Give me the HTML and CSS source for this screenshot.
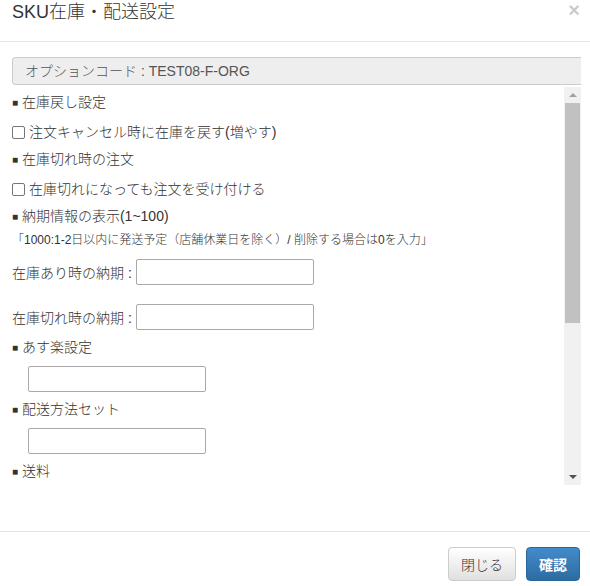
FILE: index.html
```
<!DOCTYPE html>
<html lang="ja">
<head>
    <meta charset="UTF-8">
    <title>SKU在庫・配送設定</title>
    <link rel="stylesheet" href="styles.css">
</head>
<body>

<div class="modal">
    <div class="modal-header">
        <h4 class="modal-title">SKU在庫・配送設定</h4>
        <span class="close">&times;</span>
    </div>

    <div class="modal-body">
        <div class="option-code">オプションコード : TEST08-F-ORG</div>

        <div class="scroll-box">
            <div class="scroll-content">
                <div class="section-title first"><span class="mark">■</span> 在庫戻し設定</div>
                <label class="check-row"><span class="checkbox"></span>注文キャンセル時に在庫を戻す(増やす)</label>

                <div class="section-title"><span class="mark">■</span> 在庫切れ時の注文</div>
                <label class="check-row"><span class="checkbox"></span>在庫切れになっても注文を受け付ける</label>

                <div class="section-title"><span class="mark">■</span> 納期情報の表示(1~100)</div>
                <div class="note">「1000:1-2日以内に発送予定（店舗休業日を除く）/ 削除する場合は0を入力」</div>

                <div class="field-row">
                    <span class="field-label">在庫あり時の納期 :</span>
                    <span class="text-input"></span>
                </div>
                <div class="field-row second">
                    <span class="field-label">在庫切れ時の納期 :</span>
                    <span class="text-input"></span>
                </div>

                <div class="section-title"><span class="mark">■</span> あす楽設定</div>
                <div class="indent-input"><span class="text-input"></span></div>

                <div class="section-title"><span class="mark">■</span> 配送方法セット</div>
                <div class="indent-input"><span class="text-input"></span></div>

                <div class="section-title"><span class="mark">■</span> 送料</div>
            </div>

            <div class="scrollbar">
                <div class="arrow up"></div>
                <div class="track">
                    <div class="thumb"></div>
                </div>
                <div class="arrow down"></div>
            </div>
        </div>
    </div>

    <div class="modal-footer">
        <button class="btn btn-default">閉じる</button>
        <button class="btn btn-primary">確認</button>
    </div>
</div>

</body>
</html>
```

FILE: styles.css
```
body {
    margin: 0;
    background: #fff;
    font-family: "Liberation Sans", Arial, "Noto Sans CJK JP", sans-serif;
    font-size: 14px;
    font-weight: 300;
    color: #333;
}
.modal {
    width: 590px;
}
.modal-header {
    height: 42px;
    box-sizing: border-box;
    border-bottom: 1px solid #e5e5e5;
    padding: 1px 12px 0 12px;
    display: flex;
    justify-content: space-between;
    align-items: flex-start;
}
.modal-title {
    margin: 0;
    font-size: 18px;
    font-weight: 300;
    line-height: 22px;
    color: #333;
}
.close {
    font-size: 20px;
    font-weight: bold;
    color: #000;
    opacity: 0.2;
    line-height: 18px;
    margin-right: -2px;
}
.modal-body {
    padding: 15px 9px 0 12px;
}
.option-code {
    height: 28px;
    box-sizing: border-box;
    background: #eee;
    border: 1px solid #ccc;
    border-right: none;
    border-radius: 4px 0 0 4px;
    padding: 0 12px;
    line-height: 26px;
    color: #555;
}
.scroll-box {
    margin-top: 2px;
    height: 398px;
    display: flex;
}
.scroll-content {
    flex: 1;
    overflow: hidden;
}
.section-title {
    height: 20px;
    line-height: 20px;
    margin-top: 7px;
    white-space: nowrap;
}
.section-title.first {
    margin-top: 5px;
}
.mark {
    font-family: "DejaVu Sans", sans-serif;
    font-size: 10px;
    line-height: 1;
    vertical-align: 1px;
}
.check-row {
    display: flex;
    align-items: center;
    height: 20px;
    line-height: 20px;
    margin-top: 10px;
}
.checkbox {
    width: 11px;
    height: 11px;
    border: 1px solid #767676;
    border-radius: 2px;
    margin-right: 4px;
    background: #fff;
}
.note {
    font-size: 12px;
    height: 17px;
    line-height: 17px;
    margin-top: 6px;
    white-space: nowrap;
}
.field-row {
    display: flex;
    align-items: center;
    margin-top: 10px;
}
.field-row.second {
    margin-top: 19px;
}
.field-label {
    width: 124px;
}
.text-input {
    display: block;
    width: 176px;
    height: 24px;
    border: 1px solid #a9a9a9;
    border-radius: 2px;
    background: #fff;
}
.indent-input {
    padding-left: 16px;
    margin-top: 9px;
}
.scrollbar {
    width: 17px;
    background: #f1f1f1;
    display: flex;
    flex-direction: column;
}
.arrow {
    height: 16px;
    display: flex;
    justify-content: center;
    align-items: center;
}
.arrow.up::before {
    content: "";
    border-left: 4px solid transparent;
    border-right: 4px solid transparent;
    border-bottom: 4px solid #a3a3a3;
}
.arrow.down::before {
    content: "";
    border-left: 4px solid transparent;
    border-right: 4px solid transparent;
    border-top: 4px solid #505050;
}
.track {
    flex: 1;
    padding: 0 1px;
}
.thumb {
    height: 220px;
    background: #c1c1c1;
}
.modal-footer {
    border-top: 1px solid #e5e5e5;
    margin-top: 46px;
    padding: 15px 10px 0 0;
    display: flex;
    justify-content: flex-end;
    gap: 10px;
}
.btn {
    height: 34px;
    padding: 0 12px;
    font-family: "Liberation Sans", Arial, "Noto Sans CJK JP", sans-serif;
    font-size: 14px;
    font-weight: 300;
    border-radius: 4px;
    border: 1px solid #ccc;
}
.btn-default {
    background: linear-gradient(#fff, #e0e0e0);
    color: #333;
}
.btn-primary {
    background: linear-gradient(#428bca, #2d6ca2);
    border-color: #2b669a;
    color: #fff;
    font-weight: bold;
}
```
